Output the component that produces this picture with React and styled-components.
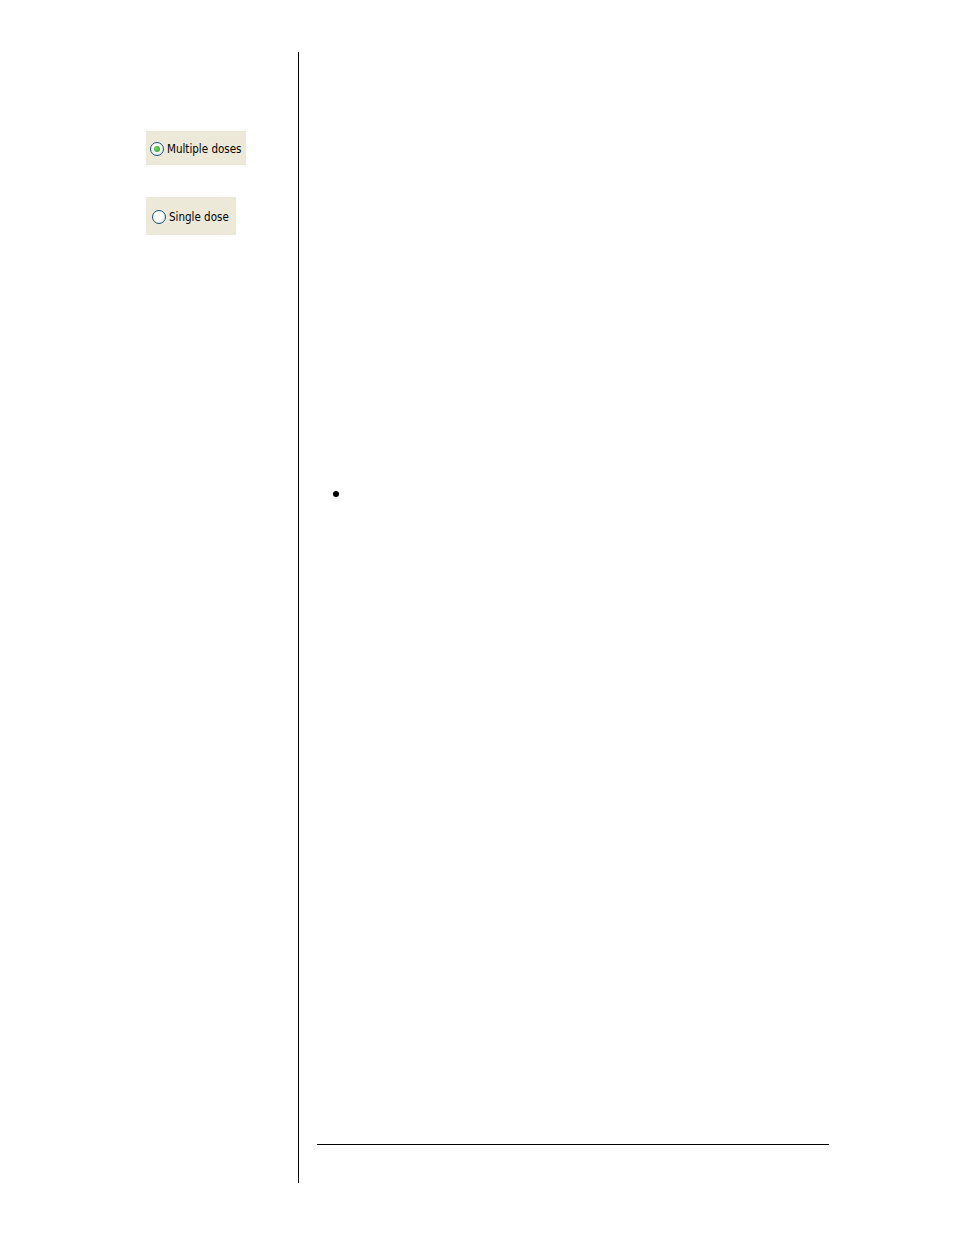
import React from "react";
import styled, { createGlobalStyle } from "styled-components";

const Global = createGlobalStyle`
  html, body {
    margin: 0;
    padding: 0;
    background: #fff;
  }
  body {
    font-family: "Liberation Sans", Arial, sans-serif;
  }
`;

const Page = styled.div`
  display: flex;
  width: 954px;
  height: 1235px;
  padding-top: 52px;
  box-sizing: border-box;
`;

const Side = styled.div`
  width: 298px;
  flex-shrink: 0;
  display: flex;
  flex-direction: column;
  align-items: flex-start;
  padding: 79px 0 0 146px;
  box-sizing: border-box;
  gap: 32px;
`;

const Main = styled.div`
  width: 531px;
  height: 1131px;
  border-left: 1px solid #000;
  display: flex;
  flex-direction: column;
  padding-left: 18px;
  box-sizing: border-box;
`;

const Option = styled.div`
  display: flex;
  align-items: center;
  gap: 3px;
  background: #ece9d8;
  height: ${(p) => p.$h}px;
  padding: 2px ${(p) => p.$pr}px 0 ${(p) => p.$pl}px;
  font-family: Tahoma, "DejaVu Sans Condensed", "Liberation Sans", sans-serif;
  font-size: 11.5px;
  color: #000;
  box-sizing: border-box;
  white-space: nowrap;
`;

const Radio = styled.span`
  width: 14px;
  height: 14px;
  border-radius: 50%;
  border: 1px solid #1c5180;
  box-sizing: border-box;
  background: radial-gradient(circle at 40% 40%, #fff 30%, #dcdcd6 100%);
  display: flex;
  align-items: center;
  justify-content: center;
  flex-shrink: 0;
`;

const Dot = styled.span`
  width: 6px;
  height: 6px;
  border-radius: 50%;
  background: radial-gradient(circle at 40% 40%, #6fdc5f, #21a121);
`;

const List = styled.ul`
  margin: 0;
  padding: 0 0 0 16px;
  margin-top: 434px;
  list-style: none;
`;

const Item = styled.li`
  position: relative;
  height: 16px;
  &::before {
    content: "";
    position: absolute;
    left: 0;
    top: 5px;
    width: 6px;
    height: 6px;
    border-radius: 50%;
    background: #000;
  }
`;

const Rule = styled.div`
  margin-top: auto;
  margin-bottom: 38px;
  border-top: 1.5px solid #000;
  width: 512px;
`;

export default function App() {
  return (
    <Page>
      <Global />
      <Side>
        <Option $h={34} $pl={4} $pr={5}>
          <Radio>
            <Dot />
          </Radio>
          <span>Multiple doses</span>
        </Option>
        <Option $h={38} $pl={6} $pr={7}>
          <Radio />
          <span>Single dose</span>
        </Option>
      </Side>
      <Main>
        <List>
          <Item />
        </List>
        <Rule />
      </Main>
    </Page>
  );
}
